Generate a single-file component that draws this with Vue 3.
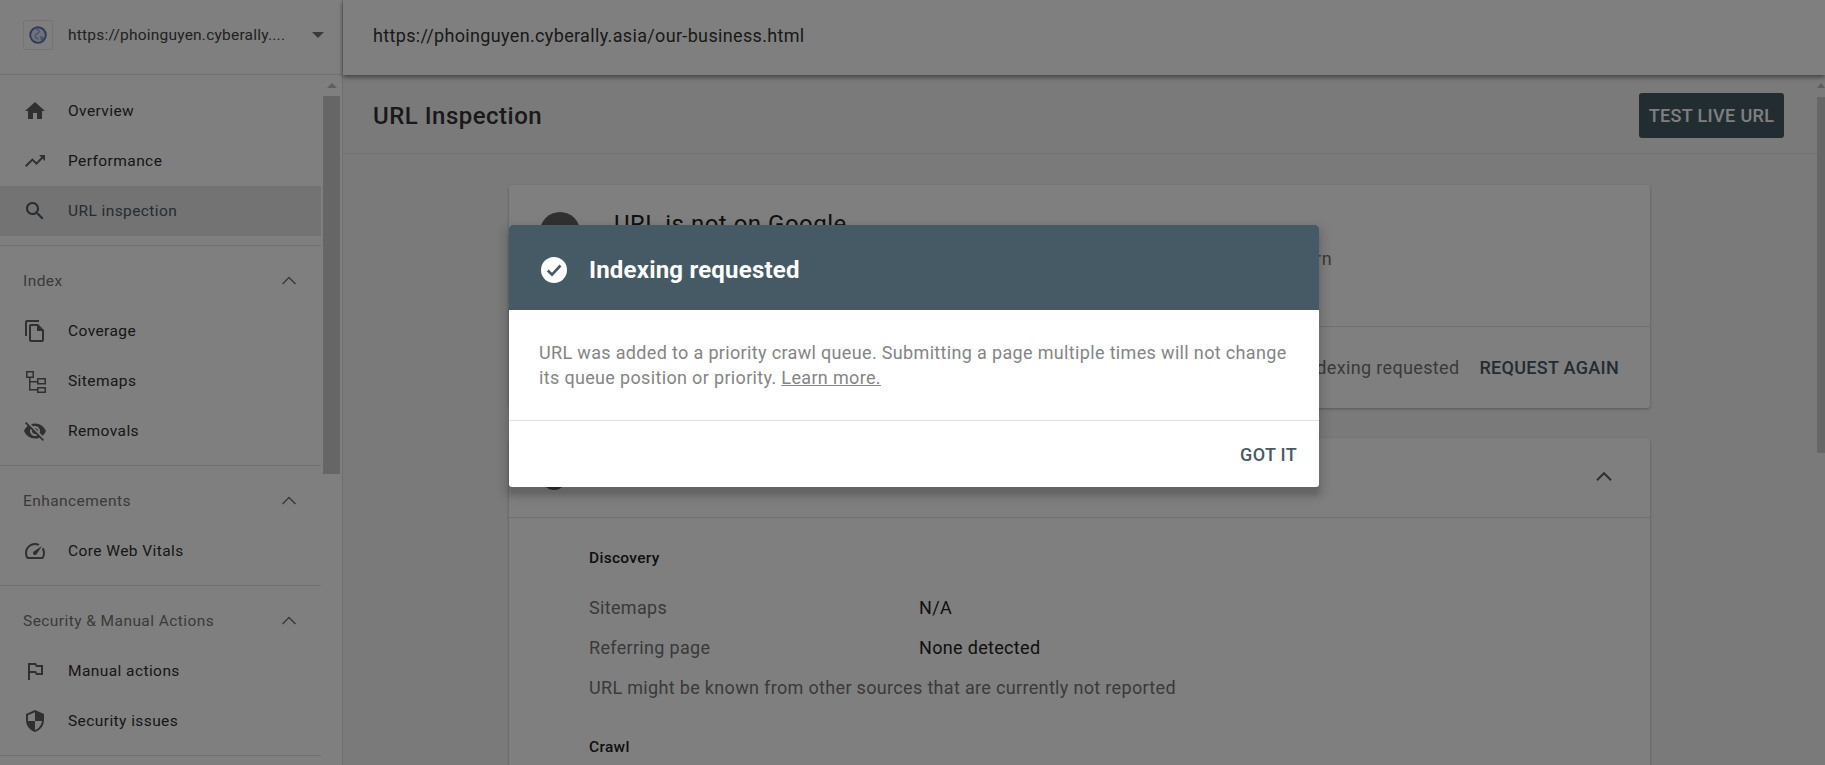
<script setup>
const iconPaths = {
  home: 'M10 20v-6h4v6h5v-8h3L12 3 2 12h3v8z',
  trend: 'M16 6l2.29 2.29-4.88 4.88-4-4L2 16.59 3.41 18l6-6 4 4 6.3-6.29L22 12V6z',
  search: 'M15.5 14h-.79l-.28-.27C15.41 12.59 16 11.11 16 9.5 16 5.91 13.09 3 9.5 3S3 5.91 3 9.5 5.91 16 9.5 16c1.61 0 3.09-.59 4.23-1.57l.27.28v.79l5 4.99L20.49 19l-4.99-5zm-6 0C7.01 14 5 11.99 5 9.5S7.01 5 9.5 5 14 7.01 14 9.5 11.99 14 9.5 14z',
  copy: 'M16 1H4C2.9 1 2 1.9 2 3v14h2V3h12V1zm-1 4H8c-1.1 0-1.99.9-1.99 2L6 21c0 1.1.89 2 1.99 2H19c1.1 0 2-.9 2-2V11l-6-6zM8 21V7h6v5h5v9H8z',
  sitemap: 'M3 2h8v7H3zM4.500 3.500v4h5v-4zM6 9h1.500v3H14v1.500H7.500V20H14v1.500H6zM14 9h9v6.500h-9zM15.500 10.500v3.500h6v-3.500zM14 18h9v6h-9zM15.500 19.500v3h6v-3z',
  eye: 'M12 7c2.76 0 5 2.24 5 5 0 .65-.13 1.26-.36 1.83l2.92 2.92c1.51-1.26 2.7-2.89 3.43-4.75-1.73-4.39-6-7.5-11-7.5-1.4 0-2.74.25-3.98.7l2.16 2.16C10.74 7.13 11.35 7 12 7zM2 4.27l2.28 2.28.46.46C3.08 8.3 1.78 10.02 1 12c1.73 4.39 6 7.5 11 7.5 1.55 0 3.03-.3 4.38-.84l.42.42L19.73 22 21 20.73 3.27 3 2 4.27zM7.53 9.8l1.55 1.55c-.05.21-.08.43-.08.65 0 1.66 1.34 3 3 3 .22 0 .44-.03.65-.08l1.55 1.55c-.67.33-1.41.53-2.2.53-2.76 0-5-2.24-5-5 0-.79.2-1.53.53-2.2zm4.31-.78l3.15 3.15.02-.16c0-1.66-1.34-3-3-3l-.17.01z',
  gauge: 'M20.4 8.6l-1.5 1.5c.7 1.2 1.1 2.5 1.1 3.9 0 1.5-.3 2.9-.9 4H5.200C4.500 16.900 4 15.500 4 14c0-4.400 3.600-8 8-8 1.100 0 2.200.200 3.100.700l1.500-1.500C15.200 4.400 13.700 4 12 4 6.500 4 2 8.500 2 14c0 1.800.400 3.500 1.200 5 .400.600 1.100 1 1.800 1h14c.700 0 1.400-.400 1.800-1 .800-1.500 1.200-3.200 1.200-5 0-2-.600-3.900-1.600-5.400zM10.600 15.400c.800.800 2 .800 2.800 0L19 7l-8.400 5.600c-.800.800-.800 2 0 2.800z',
  flag: 'M14 6l-1-2H5v17h2v-7h5l1 2h7V6h-6zm4 8h-4l-1-2H7V6h5l1 2h5v6z',
  shield: 'M12 1L3 5v6c0 5.55 3.84 10.74 9 12 5.16-1.26 9-6.45 9-12V5l-9-4zm0 10.99h7c-.53 4.12-3.28 7.79-7 8.94V12H5V6.3l7-3.11v8.8z',
}

const navGroups = [
  {
    items: [
      { label: 'Overview', icon: 'home' },
      { label: 'Performance', icon: 'trend' },
      { label: 'URL inspection', icon: 'search', active: true },
    ],
  },
  {
    title: 'Index',
    items: [
      { label: 'Coverage', icon: 'copy' },
      { label: 'Sitemaps', icon: 'sitemap' },
      { label: 'Removals', icon: 'eye' },
    ],
  },
  {
    title: 'Enhancements',
    items: [{ label: 'Core Web Vitals', icon: 'gauge' }],
  },
  {
    title: 'Security & Manual Actions',
    items: [
      { label: 'Manual actions', icon: 'flag' },
      { label: 'Security issues', icon: 'shield' },
    ],
  },
]

const discovery = [
  { key: 'Sitemaps', value: 'N/A' },
  { key: 'Referring page', value: 'None detected' },
]
</script>

<template>
  <div class="page">
    <aside class="sidebar">
      <div class="property">
        <span class="favicon">
          <svg viewBox="0 0 24 24" width="22" height="22">
            <circle cx="12" cy="12" r="8.500" fill="#dfe5f5" stroke="#5a74b8" stroke-width="2" />
            <path d="M9 5c3 1 5 2 4 4s-4 1-4 4 3 2 3 4M15 14l3 1-2 3z" fill="none" stroke="#8fa3d6" stroke-width="1.500" />
          </svg>
        </span>
        <span class="property-name">https://phoinguyen.cyberally....</span>
        <span class="caret"></span>
      </div>
      <div class="nav-wrap">
        <nav class="nav">
          <section v-for="(group, i) in navGroups" :key="i" class="group">
            <div v-if="group.title" class="group-title">
              <span>{{ group.title }}</span>
              <svg viewBox="0 0 24 24" width="24" height="24"><path d="M5.500 15l6.500-6.500 6.500 6.500" /></svg>
            </div>
            <a v-for="item in group.items" :key="item.label" class="nav-item" :class="{ active: item.active }">
              <svg viewBox="0 0 24 24" width="24" height="24"><path :d="iconPaths[item.icon]" fill-rule="evenodd" /></svg>
              <span>{{ item.label }}</span>
            </a>
          </section>
        </nav>
        <div class="nav-scroll">
          <span class="scroll-up"></span>
          <span class="scroll-thumb"></span>
        </div>
      </div>
    </aside>

    <div class="content">
      <header class="topbar">https://phoinguyen.cyberally.asia/our-business.html</header>
      <div class="main-wrap">
        <main class="main">
          <div class="title-bar">
            <h1>URL Inspection</h1>
            <button class="primary">TEST LIVE URL</button>
          </div>

          <div class="cards">
            <section class="card status-card">
              <div class="status-top">
                <span class="info-dot"></span>
                <div class="status-text">
                  <h2>URL is not on Google</h2>
                  <p>This page is not indexed. Pages that aren't indexed can't be served on Google. Learn</p>
                </div>
              </div>
              <div class="status-actions">
                <span>Indexing requested</span>
                <button class="flat">REQUEST AGAIN</button>
              </div>
            </section>

            <section class="card detail-card">
              <div class="detail-head">
                <span class="info-dot small"></span>
                <span class="detail-title">Coverage</span>
                <span class="detail-sub">URL is unknown to Google</span>
                <svg viewBox="0 0 24 24" width="26" height="26"><path d="M5.500 15l6.500-6.500 6.500 6.500" /></svg>
              </div>
              <div class="detail-body">
                <h3>Discovery</h3>
                <div v-for="row in discovery" :key="row.key" class="kv">
                  <span class="k">{{ row.key }}</span>
                  <span class="v">{{ row.value }}</span>
                </div>
                <p class="note">URL might be known from other sources that are currently not reported</p>
                <h3 class="crawl">Crawl</h3>
              </div>
            </section>
          </div>
        </main>
        <div class="main-scroll">
          <span class="scroll-up"></span>
          <span class="scroll-thumb"></span>
        </div>
      </div>
    </div>

    <div class="overlay">
      <div class="dialog">
        <div class="dialog-head">
          <svg viewBox="0 0 26 26" width="26" height="26">
            <circle cx="13" cy="13" r="13" fill="#fff" />
            <path d="M6.800 13.500l4.200 4.200 8.500-9.200" fill="none" stroke="#455a64" stroke-width="2.600" />
          </svg>
          <h2>Indexing requested</h2>
        </div>
        <div class="dialog-body">
          URL was added to a priority crawl queue. Submitting a page multiple times will not change its queue position or priority.
          <a>Learn more.</a>
        </div>
        <div class="dialog-foot">
          <button class="got-it">GOT IT</button>
        </div>
      </div>
    </div>
  </div>
</template>

<style>
html, body {
  margin: 0;
  overflow: hidden;
}
</style>

<style scoped>
.page {
  position: relative;
  display: flex;
  width: 1825px;
  height: 765px;
  overflow: hidden;
  background: #fff;
  font-family: Roboto, "Liberation Sans", sans-serif;
  color: #212121;
}

.sidebar {
  width: 342px;
  flex: none;
  border-right: 1px solid #e0e0e0;
  display: flex;
  flex-direction: column;
}

.property {
  height: 75px;
  flex: none;
  box-sizing: border-box;
  border-bottom: 1px solid #e0e0e0;
  display: flex;
  align-items: center;
  padding: 0 18px 5px 23px;
}

.favicon {
  width: 28px;
  height: 28px;
  border: 1px solid #e8e8e8;
  border-radius: 2px;
  display: flex;
  align-items: center;
  justify-content: center;
  margin-right: 15px;
}

.property-name {
  flex: 1;
  font-size: 15.500px;
  letter-spacing: 0.22px;
  color: #444;
  white-space: nowrap;
}

.caret {
  border-left: 6px solid transparent;
  border-right: 6px solid transparent;
  border-top: 6px solid #757575;
}

.nav-wrap {
  display: flex;
  flex: 1;
  min-height: 0;
}

.nav {
  width: 321px;
  flex: none;
  padding-top: 11px;
}

.group {
  border-bottom: 1px solid #e0e0e0;
  padding-bottom: 9px;
  margin-bottom: 10px;
}

.group-title {
  height: 50px;
  padding: 0 20px 0 23px;
  display: flex;
  align-items: center;
  justify-content: space-between;
  font-size: 15.500px;
  letter-spacing: 0.43px;
  color: #757575;
}

.group-title svg {
  fill: none;
  stroke: #757575;
  stroke-width: 1.500;
}

.nav-item {
  height: 50px;
  padding-left: 23px;
  display: flex;
  align-items: center;
  gap: 21px;
  font-size: 15.500px;
  letter-spacing: 0.42px;
  color: #2e2e2e;
}

.nav-item svg {
  fill: #616161;
  flex: none;
}

.nav-item.active {
  background: #e6e6e6;
  color: #455a64;
}

.nav-item.active svg {
  fill: #455a64;
}

.nav-scroll {
  width: 17px;
  margin-left: 2px;
  display: flex;
  flex-direction: column;
  align-items: center;
}

.scroll-up {
  margin-top: 8px;
  border-left: 5px solid transparent;
  border-right: 5px solid transparent;
  border-bottom: 5px solid #bdbdbd;
}

.scroll-thumb {
  width: 100%;
  height: 378px;
  margin-top: 8px;
  background: #cdcdcd;
}

.content {
  flex: 1;
  min-width: 0;
  display: flex;
  flex-direction: column;
}

.topbar {
  height: 75px;
  flex: none;
  box-sizing: border-box;
  padding: 0 0 5px 30px;
  display: flex;
  align-items: center;
  font-size: 18px;
  letter-spacing: 0.34px;
  color: #333;
  box-shadow: 0 2px 5px rgba(0, 0, 0, 0.5);
  position: relative;
  z-index: 1;
}

.main-wrap {
  display: flex;
  flex: 1;
  min-height: 0;
  background: #f5f5f5;
}

.main {
  flex: 1;
  min-width: 0;
}

.main-scroll {
  width: 8px;
  display: flex;
  flex-direction: column;
  align-items: center;
  background: #f5f5f5;
}

.main-scroll .scroll-up {
  margin-top: 8px;
  border-left-width: 4px;
  border-right-width: 4px;
}

.main-scroll .scroll-thumb {
  height: 356px;
  margin-top: 9px;
}

.title-bar {
  height: 79px;
  box-sizing: border-box;
  background: #f5f5f5;
  border-bottom: 1px solid #e0e0e0;
  padding: 3px 33px 0 30px;
  display: flex;
  align-items: center;
  justify-content: space-between;
}

.title-bar h1 {
  margin: 0;
  font-size: 24px;
  font-weight: 500;
  letter-spacing: 0.5px;
  color: #333;
}

.primary {
  width: 145px;
  height: 45px;
  padding: 0;
  border: none;
  border-radius: 3px;
  background: #455a64;
  color: #fff;
  font: 500 18px Roboto, sans-serif;
  letter-spacing: 0.35px;
}

.cards {
  width: 1141px;
  margin-left: 166px;
  padding-top: 31px;
}

.card {
  background: #fff;
  border-radius: 3px;
  box-shadow: 0 1px 3px rgba(0, 0, 0, 0.3);
}

.status-card {
  height: 223px;
  display: flex;
  flex-direction: column;
  margin-bottom: 30px;
}

.status-top {
  height: 142px;
  box-sizing: border-box;
  border-bottom: 1px solid #e0e0e0;
  display: flex;
  padding: 27px 0 0 31px;
  gap: 34px;
}

.info-dot {
  width: 40px;
  height: 40px;
  border-radius: 50%;
  background: #616161;
  flex: none;
}

.info-dot.small {
  position: absolute;
  left: 33px;
  top: 28px;
  width: 24px;
  height: 24px;
}

.status-text {
  margin-top: -2px;
}

.status-text h2 {
  margin: 0 0 10px;
  font-size: 24px;
  font-weight: 400;
  letter-spacing: 0.5px;
  color: #212121;
}

.status-text p {
  margin: 0;
  font-size: 18px;
  letter-spacing: 0.6px;
  color: #757575;
  white-space: nowrap;
}

.status-actions {
  flex: 1;
  display: flex;
  align-items: center;
  justify-content: flex-end;
  padding-right: 31px;
  gap: 20px;
  font-size: 18px;
  letter-spacing: 0.35px;
  color: #757575;
}

.flat {
  border: none;
  padding: 0;
  background: none;
  color: #455a64;
  font: 500 18px Roboto, sans-serif;
  letter-spacing: 0.3px;
}

.detail-head {
  height: 80px;
  box-sizing: border-box;
  border-bottom: 1px solid #e0e0e0;
  display: flex;
  padding: 27px 0 0 80px;
  position: relative;
  font-size: 18px;
}

.detail-title {
  width: 329px;
}

.detail-head svg {
  position: absolute;
  right: 33px;
  top: 26px;
  fill: none;
  stroke: #616161;
  stroke-width: 1.800;
}

.detail-body {
  padding: 31px 0 60px 80px;
}

.detail-body h3 {
  margin: 0 0 20px;
  font-size: 15.500px;
  font-weight: 500;
  letter-spacing: 0.3px;
  color: #212121;
}

.detail-body .crawl {
  margin-top: 30px;
}

.kv {
  display: flex;
  height: 40px;
  align-items: center;
  font-size: 18px;
  letter-spacing: 0.32px;
}

.k {
  width: 330px;
  color: #757575;
}

.v {
  color: #212121;
}

.note {
  margin: 1px 0 0;
  height: 40px;
  line-height: 40px;
  font-size: 18px;
  letter-spacing: 0.33px;
  color: #757575;
}

.overlay {
  position: absolute;
  inset: 0;
  z-index: 5;
  background: rgba(0, 0, 0, 0.5);
  padding: 225px 0 0 509px;
}

.dialog {
  width: 810px;
  border-radius: 3px;
  background: #fff;
  box-shadow: 0 8px 4px rgba(0, 0, 0, 0.12), 0 6px 8px 6px rgba(0, 0, 0, 0.1);
  overflow: hidden;
}

.dialog-head {
  height: 85px;
  box-sizing: border-box;
  background: #455a64;
  display: flex;
  align-items: center;
  padding: 4px 0 0 32px;
  gap: 22px;
}

.dialog-head h2 {
  margin: 0;
  font-size: 24px;
  font-weight: 700;
  letter-spacing: 0.2px;
  color: #fff;
}

.dialog-body {
  height: 111px;
  box-sizing: border-box;
  padding: 30px 24px 0 30px;
  font-size: 18px;
  line-height: 25px;
  letter-spacing: 0.34px;
  color: #858585;
  border-bottom: 1px solid #e0e0e0;
}

.dialog-body a {
  text-decoration: underline;
}

.dialog-foot {
  height: 66px;
  display: flex;
  align-items: center;
  justify-content: flex-end;
  padding-right: 22px;
}

.got-it {
  border: none;
  padding: 0;
  background: none;
  color: #455a64;
  font: 500 18px Roboto, sans-serif;
  letter-spacing: 0.3px;
}
</style>
